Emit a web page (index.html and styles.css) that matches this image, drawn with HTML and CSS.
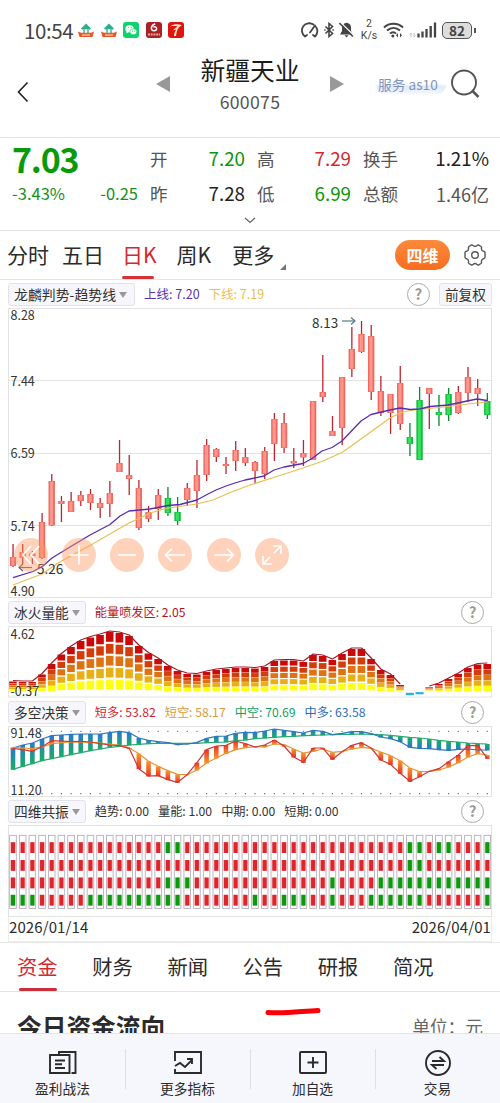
FILE: index.html
```html
<!DOCTYPE html>
<html lang="zh-CN">
<head>
    <meta charset="UTF-8">
    <meta name="viewport" content="width=device-width, initial-scale=1.0">
    <title>新疆天业 600075</title>
    <link rel="stylesheet" href="styles.css">
</head>
<body>
    <div class="status-bar">
        <span class="time">10:54</span>
        <div class="apps">
            <svg width="16" height="16" viewBox="0 0 16 16"><path d="M3 6.5L8 1.5l5 5-1 1H4z" fill="#2fae8b"/><path d="M5 7h6v4H5z" fill="#6fcbb0"/><path d="M7 7.500h2V11H7z" fill="#fff"/><path d="M0 9.500l3 1.200h10l3-1.200-1.500 5.500h-13z" fill="#ea5526"/><path d="M4 13h8" stroke="#fbd0bd" stroke-width="1.200"/></svg>
            <svg width="16" height="16" viewBox="0 0 16 16"><path d="M3 6.500L8 1.500l5 5-1 1H4z" fill="#2fae8b"/><path d="M5 7h6v4H5z" fill="#6fcbb0"/><path d="M7 7.500h2V11H7z" fill="#fff"/><path d="M0 9.500l3 1.200h10l3-1.200-1.500 5.500h-13z" fill="#ea5526"/><path d="M4 13h8" stroke="#fbd0bd" stroke-width="1.200"/></svg>
            <svg width="16" height="16" viewBox="0 0 16 16"><rect width="16" height="16" rx="3" fill="#0bd46c"/><ellipse cx="6.500" cy="6.700" rx="4.200" ry="3.500" fill="#fff"/><path d="M3.500 9l0 2.500 2.500-1.500z" fill="#fff"/><ellipse cx="10.300" cy="9.700" rx="3.500" ry="2.900" fill="#fff" stroke="#0bd46c" stroke-width=".6"/><path d="M5 5.700h.9M7.800 5.700h.9M9 9.200h.8M11.300 9.200h.8" stroke="#0bd46c" stroke-width="1"/></svg>
            <svg width="16" height="16" viewBox="0 0 16 16"><rect width="16" height="16" rx="3" fill="#ae1f23"/><path d="M9.200 1.800C6.500 3 5.300 4.500 5.400 6.500c.3 3 5 3 5.200.2 0-1.800-2-2.600-3.200-1.400" fill="none" stroke="#fff" stroke-width="1.500"/><path d="M2 12.500h12" stroke="#e9a99b" stroke-width="2" stroke-dasharray="2 .7"/></svg>
            <svg width="16" height="16" viewBox="0 0 16 16"><rect width="16" height="16" rx="3" fill="#e0140f"/><path d="M2 4.500C6 1.500 10 2 14 3.200 10.500 5 9 7 8 14H6c.3-3 .8-4.500 2.300-6.500L5 8.300C7 6.500 8 5.500 9.500 4.500 7 3.800 4.500 4 2 4.500z" fill="#ffe9c9"/></svg>
        </div>
        <div class="system">
            <svg class="gauge" width="18" height="17" viewBox="0 0 18 17"><path d="M4 14.500A7.200 7.200 0 0 1 12.500 2.600M15 5A7.200 7.200 0 0 1 14 14.500M9 10.500L14 3.500M4 14.500l2-1.500M14 14.500l-2-1.500" fill="none" stroke="#444" stroke-width="1.800" stroke-linecap="round"/></svg>
            <svg class="bluetooth" width="10" height="16" viewBox="0 0 10 16"><path d="M1.500 4.500l7 7L5 14.500v-13L8.500 4.500l-7 7M.2 8h1.400M8.400 8h1.400" fill="none" stroke="#444" stroke-width="1.600"/></svg>
            <svg class="mute" width="15" height="16" viewBox="0 0 15 16"><path d="M7.500 .8c3.500 .7 4.500 2.500 4.500 5v3.200l2 3.500H1L3 9V5.500C3.500 3 5 1.300 7.500 .8zM5.500 13.300h4l-2 2.200z" fill="#444"/><path d="M1.500 .5l13.500 13" stroke="#fff" stroke-width="1.300"/><path d="M.4 1l13.500 13.500" stroke="#444" stroke-width="1.600"/></svg>
            <div class="speed"><div>2</div><div>K/s</div></div>
            <svg class="wifi" width="21" height="16" viewBox="0 0 21 16"><path d="M1 5.500c5.200-5 13.800-5 19 0M4 8.600c4-3.600 9-3.600 13 0M7 11.600c2-1.800 4.500-1.800 6 0" fill="none" stroke="#444" stroke-width="2"/><circle cx="9.800" cy="14" r="1.500" fill="#444"/><path d="M15 11l-2 2.200 2 2.200zM17 11l2 2.200-2 2.200z" fill="#444"/></svg>
            <svg class="signal" width="28" height="16" viewBox="0 0 28 16"><path d="M2 11v4M0.500 12.500L2 11M5 15v-4M6.500 13.500L5 15" stroke="#bbb"/><path d="M9.500 15.500v-4M13.500 15.500v-6M17.500 15.500v-8.500M21.700 15.500v-11.500M26 15.500v-15" stroke="#444" stroke-width="2.300"/></svg>
            <span class="battery">82</span>
        </div>
    </div>

    <div class="nav">
        <svg class="back" width="12" height="22" viewBox="0 0 12 22"><path d="M10.500 1.500L1.500 11l9 9.500" fill="none" stroke="#222" stroke-width="1.600"/></svg>
        <svg class="prev" width="14" height="16" viewBox="0 0 14 16"><path d="M14 0v16L0 8z" fill="#999"/></svg>
        <div class="stock">
            <div class="stock-name">新疆天业</div>
            <div class="stock-code">600075</div>
        </div>
        <svg class="next" width="14" height="16" viewBox="0 0 14 16"><path d="M0 0v16l14-8z" fill="#999"/></svg>
        <span class="service">服务 as10</span>
        <svg class="search" width="29" height="30" viewBox="0 0 29 30"><circle cx="13" cy="13.500" r="12" fill="none" stroke="#555" stroke-width="1.900"/><path d="M21.500 22l6 6" stroke="#555" stroke-width="2.500"/></svg>
    </div>

    <div class="quote">
        <div class="quote-grid">
            <div class="cell"><b class="price">7.03</b></div>
            <div class="cell"><label>开</label><span class="down">7.20</span></div>
            <div class="cell"><label>高</label><span class="up">7.29</span></div>
            <div class="cell"><label>换手</label><span>1.21%</span></div>
            <div class="cell change"><span>-3.43%</span><span>-0.25</span></div>
            <div class="cell"><label>昨</label><span>7.28</span></div>
            <div class="cell"><label>低</label><span class="down">6.99</span></div>
            <div class="cell"><label>总额</label><span class="amount">1.46亿</span></div>
        </div>
        <svg class="expand" width="12" height="7" viewBox="0 0 12 7"><path d="M1 1l5 4.500L11 1" fill="none" stroke="#666" stroke-width="1.300"/></svg>
    </div>

    <div class="periods">
        <span>分时</span>
        <span>五日</span>
        <span class="active">日K</span>
        <span>周K</span>
        <span class="more">更多</span>
        <button class="pill">四维</button>
        <svg class="gear" width="24" height="24" viewBox="0 0 24 24"><path d="M8.200 2.200Q9.200 1.600 10 2.500Q12 4.300 14 2.500Q14.800 1.600 15.800 2.200L18 3.500Q18.800 4 18.500 5Q18 7.500 20.600 8.300Q22 8.600 22 9.700V14.300Q22 15.400 20.600 15.700Q18 16.500 18.500 19Q18.800 20 18 20.500L15.800 21.800Q14.800 22.400 14 21.500Q12 19.700 10 21.500Q9.200 22.400 8.200 21.800L6 20.500Q5.200 20 5.500 19Q6 16.500 3.400 15.700Q2 15.400 2 14.300V9.700Q2 8.600 3.400 8.300Q6 7.500 5.500 5Q5.200 4 6 3.500Z" fill="none" stroke="#555" stroke-width="1.400"/><circle cx="12" cy="12" r="3.300" fill="none" stroke="#555" stroke-width="1.400"/></svg>
    </div>

    <div class="indicator main">
        <span class="select">龙麟判势-趋势线</span>
        <span class="purple">上线: 7.20</span>
        <span class="yellow">下线: 7.19</span>
        <span class="help">?</span>
        <span class="adjust">前复权</span>
    </div>
    <div class="kline">
        <svg id="kline" class="chart" width="500" height="290" viewBox="0 308 500 290"></svg>
        <div class="tools">
            <span class="tool"><svg viewBox="0 0 34 34"><path d="M17 8l-8 9 8 9M25 8l-8 9 8 9"/></svg></span>
            <span class="tool"><svg viewBox="0 0 34 34"><path d="M17 7.500v19M7.500 17h19"/></svg></span>
            <span class="tool"><svg viewBox="0 0 34 34"><path d="M8 17h18"/></svg></span>
            <span class="tool"><svg viewBox="0 0 34 34"><path d="M27 17H8M14 10.500L7.500 17l6.500 6.500"/></svg></span>
            <span class="tool"><svg viewBox="0 0 34 34"><path d="M7 17h19M20 10.500l6.500 6.500-6.500 6.500"/></svg></span>
            <span class="tool"><svg viewBox="0 0 34 34"><path d="M19 15l7-7M18 8h8v8M15 19l-7 7M8 18v8h9"/></svg></span>
        </div>
    </div>

    <div class="indicator">
        <span class="select">冰火量能</span>
        <span class="crimson">能量喷发区: 2.05</span>
        <span class="help">?</span>
    </div>
    <svg id="energy" class="chart" width="500" height="72" viewBox="0 626 500 72"></svg>

    <div class="indicator">
        <span class="select">多空决策</span>
        <span class="red">短多: 53.82</span>
        <span class="orange">短空: 58.17</span>
        <span class="green">中空: 70.69</span>
        <span class="blue">中多: 63.58</span>
        <span class="help">?</span>
    </div>
    <svg id="decision" class="chart" width="500" height="71" viewBox="0 726 500 71"></svg>

    <div class="indicator">
        <span class="select">四维共振</span>
        <span>趋势: 0.00</span>
        <span>量能: 1.00</span>
        <span>中期: 0.00</span>
        <span>短期: 0.00</span>
        <span class="help">?</span>
    </div>
    <svg id="resonance" class="chart" width="500" height="92" viewBox="0 825 500 92"></svg>
    <div class="dates"><span>2026/01/14</span><span>2026/04/01</span></div>

    <div class="sections">
        <span class="active">资金</span>
        <span>财务</span>
        <span>新闻</span>
        <span>公告</span>
        <span>研报</span>
        <span>简况</span>
    </div>
    <div class="flow">
        <h2>今日资金流向</h2>
        <span class="unit">单位：元</span>
        <svg class="mark" width="58" height="10" viewBox="0 0 58 10"><path d="M3 5.500C20 7 38 4 53 3.500" fill="none" stroke="#fb0006" stroke-width="5" stroke-linecap="round"/></svg>
    </div>

    <div class="toolbar">
        <div class="action">
            <svg width="30" height="26" viewBox="0 0 30 26"><path d="M2 5h19.500v18H2zM11 4V2h16.500v21H23.500M7 10.500h10M7 14.200h7M7 18h10"/></svg>
            <span>盈利战法</span>
        </div>
        <div class="action">
            <svg width="30" height="26" viewBox="0 0 30 26"><path d="M2 11V2h26v21H2v-4M2 16l5-3 5 4 7-7M14 9h5v5"/></svg>
            <span>更多指标</span>
        </div>
        <div class="action">
            <svg width="30" height="26" viewBox="0 0 30 26"><rect x="2" y="2" width="26" height="21" rx="1"/><path d="M15 7v11M9.500 12.500h11"/></svg>
            <span>加自选</span>
        </div>
        <div class="action">
            <svg width="30" height="26" viewBox="0 0 30 26"><circle cx="15" cy="13" r="12"/><path d="M9 11h12l-4.500-4M21 15H9l4.500 4"/></svg>
            <span>交易</span>
        </div>
    </div>
    <script src="charts.js"></script>
</body>
</html>
```
FILE: styles.css
```css
* {
    box-sizing: border-box;
}

body {
    margin: 0;
    width: 500px;
    height: 1103px;
    overflow: hidden;
    background-color: #fff;
    color: #2b2b2b;
    font-family: "Noto Sans CJK SC", sans-serif;
    line-height: 1;
}

svg {
    display: block;
    flex: none;
}

/* status bar */
.status-bar {
    display: flex;
    align-items: center;
    height: 60px;
    padding: 0 28px 0 24px;
    color: #444;
}

.time {
    width: 54px;
    font-size: 20.5px;
    letter-spacing: -0.4px;
}

.apps {
    display: flex;
    gap: 6.5px;
}

.system {
    display: flex;
    align-items: center;
    margin-left: auto;
}

.bluetooth {
    margin-left: 5px;
}

.mute {
    margin-left: 5px;
}

.speed {
    width: 18px;
    margin: 0 5px 0 6px;
    font-family: Roboto, sans-serif;
    font-size: 10.5px;
    line-height: 12.5px;
    text-align: center;
}

.signal {
    margin: 0 5px 0 5px;
}

.battery {
    position: relative;
    width: 30px;
    height: 17px;
    border: 1.5px solid #555;
    border-radius: 5px;
    background-color: #ddd;
    font-size: 13.5px;
    font-weight: bold;
    line-height: 14px;
    text-align: center;
}

.battery::after {
    content: "";
    position: absolute;
    right: -4.5px;
    top: 5px;
    width: 2px;
    height: 5px;
    background-color: #555;
}

/* title */
.nav {
    display: flex;
    align-items: center;
    height: 78px;
    padding: 0 20px 30px 17px;
    border-bottom: 1px solid #e3e3e3;
}

.back {
    margin-top: 16px;
}

.prev {
    margin-left: 127px;
}

.stock {
    width: 160px;
    height: 64px;
    text-align: center;
}

.stock-name {
    font-size: 24.8px;
    line-height: 34px;
    color: #1c1c1c;
}

.stock-code {
    font-size: 17.7px;
    line-height: 30px;
    letter-spacing: 0.3px;
    color: #555;
}

.service {
    width: 70px;
    margin-left: 32px;
    padding: 3px 2px;
    border-radius: 10px;
    background: linear-gradient(transparent 50%, #deebf8 60%, #eef5fc 90%, transparent);
    font-size: 13.7px;
    line-height: 16px;
    white-space: nowrap;
    color: #8093c0;
}

.search {
    margin-left: auto;
}

/* quote */
.quote {
    height: 93px;
    padding: 3px 11px 0 12px;
    border-bottom: 1px solid #e3e3e3;
}

.quote-grid {
    display: grid;
    grid-template-columns: 126px 95px 94px 126px;
    grid-auto-rows: 35px;
    column-gap: 12px;
}

.cell {
    display: flex;
    align-items: center;
    justify-content: space-between;
    font-size: 18.8px;
    color: #222;
}

.cell label {
    font-size: 17.5px;
    color: #555;
}

.price {
    font-size: 34px;
    letter-spacing: -1.2px;
    color: #089a08;
}

.change {
    font-size: 16.5px;
    color: #16901a;
}

.down {
    color: #0b960b;
}

.up {
    color: #d2292f;
}

.cell .amount {
    font-size: 18px;
    color: #555;
}

.expand {
    margin: 6px 0 0 232px;
}

/* period tabs */
.periods {
    display: flex;
    align-items: center;
    height: 49px;
    padding-left: 7px;
    border-bottom: 1px solid #e3e3e3;
    font-size: 21px;
    line-height: 48px;
}

.periods span {
    position: relative;
    height: 48px;
    margin-right: 13px;
    line-height: 46px;
}

.periods .active {
    margin: 0 20px 0 5px;
    color: #d2292f;
}

.periods .active::after {
    content: "";
    position: absolute;
    left: 0;
    bottom: 0;
    width: 32px;
    height: 3px;
    border-radius: 2px;
    background-color: #d2323a;
}

.periods .more {
    margin-left: 8px;
}

.periods .more::after {
    content: "";
    position: absolute;
    right: -12px;
    bottom: 9px;
    border-left: 6px solid transparent;
    border-bottom: 6px solid #777;
}

.pill {
    width: 55px;
    height: 30px;
    margin-left: auto;
    padding: 0;
    border: none;
    border-radius: 15px;
    background: linear-gradient(#fa8a3e, #f96d1e);
    color: #fff;
    font: bold 16px/29px "Noto Sans CJK SC", sans-serif;
}

.gear {
    margin: 0 13px;
}

/* indicator header rows */
.indicator {
    display: flex;
    align-items: center;
    gap: 9px;
    height: 28px;
    padding: 0 16px 0 8px;
    font-size: 12.2px;
    color: #333;
    white-space: nowrap;
}

.select,
.adjust {
    height: 23px;
    padding: 0 5px;
    border: 1px solid #e2e2ec;
    border-radius: 3px;
    background-color: #f6f6fc;
    font-size: 13.7px;
    line-height: 20px;
}

.select::after {
    content: "";
    display: inline-block;
    margin-left: 3px;
    border: 4.5px solid transparent;
    border-top: 6px solid #999;
    border-bottom: none;
    vertical-align: 2px;
}

.help {
    width: 23px;
    height: 23px;
    margin-left: auto;
    border: 1px solid #aaa;
    border-radius: 50%;
    font-size: 15px;
    font-weight: bold;
    line-height: 20px;
    text-align: center;
    color: #999;
}

.main {
    padding-right: 8px;
    font-size: 12.5px;
}

.main .select {
    width: 127px;
    font-size: 13.9px;
}

.purple { color: #5b2fae; }
.yellow { color: #edbd55; }
.crimson { color: #b3151f; }
.red { color: #cf2430; }
.orange { color: #dc9a3c; }
.green { color: #12a165; }
.blue { color: #2a6cb8; }

/* charts */
.chart {
    overflow: visible;
}

.chart text {
    font-size: 12.5px;
    fill: #333;
}

.frame {
    fill: none;
    stroke: #e2e2e2;
}

.kline {
    position: relative;
}

.tools {
    position: absolute;
    left: 13.5px;
    top: 230px;
    display: flex;
    gap: 14.3px;
}

.tool {
    width: 34px;
    height: 34px;
    border-radius: 50%;
    background-color: rgba(255, 150, 94, 0.42);
}

.tool path {
    fill: none;
    stroke: #fff;
    stroke-width: 1.7;
}

.dates {
    display: flex;
    justify-content: space-between;
    height: 25px;
    margin: 0 8px;
    border: 1px solid #ececec;
    border-top: none;
    font-size: 15px;
    letter-spacing: 0.1px;
    line-height: 20px;
}

/* lower tabs */
.sections {
    display: flex;
    height: 50px;
    border-top: 1px solid #e8e8e8;
    border-bottom: 1px solid #e3e3e3;
    font-size: 20.3px;
    line-height: 47px;
}

.sections span {
    position: relative;
    width: 75.2px;
    padding-left: 17px;
}

.sections .active {
    color: #d2292f;
}

.sections .active::after {
    content: "";
    position: absolute;
    left: 19px;
    bottom: 0;
    width: 38px;
    height: 3px;
    border-radius: 2px;
    background-color: #c9303a;
}

.flow {
    position: relative;
    display: flex;
    justify-content: space-between;
    height: 41px;
    padding: 20px 17px 0;
    overflow: hidden;
}

.flow h2 {
    margin: 0;
    font-size: 24.7px;
    line-height: 28px;
    white-space: nowrap;
}

.unit {
    font-size: 17.7px;
    line-height: 28px;
    color: #666;
}

.mark {
    position: absolute;
    left: 265px;
    top: 15px;
}

/* bottom toolbar */
.toolbar {
    display: flex;
    height: 70px;
    border-top: 1px solid #e3e3e8;
    background-color: #f6f6fd;
}

.action {
    position: relative;
    flex: 1;
    display: flex;
    flex-direction: column;
    align-items: center;
    padding-top: 16px;
    font-size: 13.7px;
}

.action + .action::before {
    content: "";
    position: absolute;
    left: 0;
    top: 15px;
    height: 40px;
    border-left: 1px solid #dedee4;
}

.action svg {
    margin-bottom: 6px;
    fill: none;
    stroke: #2b2b2b;
    stroke-width: 1.9;
}
```
FILE: charts.js
```javascript
const STEP = 9.68;
const COUNT = 50;
const cx = (i) => 13 + i * STEP;
const range = (a, b) => Array.from({ length: b - a + 1 }, (_, k) => a + k);

const rect = (x, y, w, h, fill) =>
    `<rect x="${x.toFixed(2)}" y="${y.toFixed(2)}" width="${w}" height="${h.toFixed(2)}" fill="${fill}"/>`;
const line = (points, color, width = 1.2) =>
    `<polyline points="${points.map((p) => p.join(",")).join(" ")}" fill="none" stroke="${color}" stroke-width="${width}" stroke-linejoin="round"/>`;
const frame = (y, h) => `<rect class="frame" x="8.5" y="${y}" width="483" height="${h}"/>`;

// high, low, body top, body bottom
const candles = [
    [544, 567, 557, 566], [544, 564, 552, 558], [551, 564, 553.5, 556], [513, 559, 522, 558], [474, 526, 481, 525.5],
    [496, 522, 501, 504], [492, 512, 501, 512], [491, 506, 495, 501], [489, 510, 494, 503], [498, 518, 503, 508],
    [481, 517, 493, 504], [440, 472, 463, 472], [455, 495, 475, 479], [480, 530, 488, 528], [506, 522, 512, 519],
    [489, 520, 495, 509], [487, 516, 498, 513], [497, 525, 512, 521], [483, 506, 488, 500], [460, 508, 475, 491],
    [439, 481, 445, 475], [448, 462, 449, 457], [457, 474, 464, 466], [441, 471, 450, 461], [448, 466, 457, 463],
    [461, 483, 462, 471], [447, 479, 451, 474], [413, 461, 419, 444], [413, 453, 423, 448], [448, 468, 461, 463.5],
    [440, 466, 453, 457.5], [401, 460, 401, 460], [355, 402, 392, 397], [416, 436, 431, 436], [377, 445, 377, 428],
    [327, 377, 349, 369], [321, 353, 334, 352], [325, 400, 336, 392], [376, 416, 391, 413], [394, 434, 394, 413],
    [366, 430, 383, 424], [423, 456, 437, 444], [387, 460, 400, 460], [388, 429, 388, 394], [395, 426, 412, 415],
    [388, 421, 394, 415], [386, 414, 392, 413], [367, 402, 377, 393], [379, 406, 388, 394], [393, 419, 401, 415]
];
const falling = [16, 17, 41, 42, 44, 45, 49];

const upper = [
    [13, 577.7], [33, 571.5], [43, 566], [52, 558], [70, 547], [90, 535], [110, 524.5], [120, 516], [129, 511],
    [150, 509], [168, 505.5], [180, 504.5], [197, 500], [207, 494.5], [216, 490], [226, 486], [235, 483], [245, 480],
    [250, 479], [264, 476], [274, 470], [284, 467], [303, 463.5], [312, 458.5], [322, 451], [332, 447.5], [342, 441],
    [351, 431.5], [361, 421], [371, 414.5], [390, 410], [400, 408], [410, 409.5], [420, 409], [430, 406.5],
    [448, 405], [458, 403], [467, 401], [477, 399], [487, 400.5]
];
const lower = [
    [13, 585], [42, 574], [58, 563], [90, 545.5], [129, 523], [139, 518.5], [150, 513], [168, 508], [197, 504],
    [213, 500], [229, 493], [250, 485], [266, 480], [303, 468], [323, 461], [342, 452.5], [361, 439], [390, 418],
    [400, 413], [410, 410.5], [448, 406.5], [468, 404], [487, 402]
];

function drawKline() {
    let out = frame(308.5, 289);
    [380.5, 453.5, 525.5].forEach((y) => { out += line([[8, y], [492, y]], "#e2e2e2", 1); });
    candles.forEach(([high, low, top, bottom], i) => {
        const green = falling.includes(i);
        out += rect(cx(i) - 0.6, high, 1.3, low - high, green ? "#078c28" : "#bd2530");
        out += rect(cx(i) - 3.2, top, 6.4, bottom - top, green ? "#12bd3e" : "#f0685f");
        out += rect(cx(i) - 1.8, top + 0.5, 3.2, Math.max(bottom - top - 1, 1), green ? "#35e05c" : "#fb968c");
    });
    out += line(lower, "#e9bf51") + line(upper, "#5a2daf", 1.3);
    [["8.28", 320], ["7.44", 385.5], ["6.59", 458], ["5.74", 531], ["4.90", 596]].forEach(([t, y]) => {
        out += `<text x="10.500" y="${y}">${t}</text>`;
    });
    out += `<text x="312" y="327.500" style="font-size:13.500px">8.13</text>`;
    out += line([[342, 321], [355, 321]], "#557b8b") + line([[351, 317.5], [355, 321], [351, 324.5]], "#557b8b");
    out += `<text x="37" y="574" style="font-size:13.500px">5.26</text>`;
    out += line([[19, 567.5], [32, 567.5]], "#666") + line([[23, 564], [19, 567.5], [23, 571]], "#666");
    document.getElementById("kline").innerHTML = out;
}

const energy = [
    681.5, 682, 682, 674.5, 664, 654.5, 647, 641, 637.5, 635, 632, 633, 636, 646, 653.5, 659, 666, 671, 674, 674.5,
    672, 670, 669, 668, 668, 668.5, 667, 661, 660.5, 660.5, 662, 655, 656, 660, 654, 649, 649, 659, 670, 675, 685,
    null, null, 687, 684, 679, 674, 668, 664.5, 664
];
const heat = ["#c90a08", "#d53c0b", "#df7313", "#e8af16", "#ffff13"];

function drawEnergy() {
    let out = frame(626.5, 70.5);
    energy.forEach((top, i) => {
        if (top === null) {
            out += rect(cx(i) - 4, 692.8 - (i - 41) * 0.7, 8, 2.2, "#29b1df");
            return;
        }
        const part = (691.5 - top) / 5;
        const gap = part > 5.5 ? part * 0.18 : 0.3;
        heat.forEach((color, k) => { out += rect(cx(i) - 3.9, top + k * part, 7.6, part - gap, color); });
    });
    const tops = energy.map((y, i) => [cx(i), y === null ? null : y - 1]);
    out += line(tops.slice(0, 41), "#a31b2b") + line(tops.slice(43), "#a31b2b");
    out += `<text x="10.500" y="638.500">4.62</text><text x="10.500" y="696">-0.37</text>`;
    document.getElementById("energy").innerHTML = out;
}

// series below are in thirds of a pixel under y = 698
const midLong = [
    150, 141, 135, 123, 113, 111, 109, 108, 108, 108, 104, 100, 104, 120, 127, 131, 134, 140, 138, 133, 121, 115, 114,
    106, 103, 104, 99, 93, 97, 101, 105, 97, 100, 110, 106, 101, 101, 107, 117, 122, 131, 148, 151, 152, 155, 157,
    154, 153, 156, 156
];
const midShort = [
    214, 205, 197, 188, 182, 176, 170, 164, 158, 153, 148, 145, 141, 139, 137, 136, 136, 136, 136, 136, 134, 133, 132,
    128, 126, 122, 120, 118, 116, 115, 113, 112, 111, 110, 109, 109, 108, 109, 110, 112, 115, 118, 120, 123, 127, 130,
    132, 135, 137, 138
];
const nearLong = [
    151, 155, 160, 146, 128, 129, 131, 130, 132, 137, 141, 143, 151, 212, 234, 233, 245, 253, 230, 194, 155, 144, 142,
    129, 137, 147, 141, 126, 144, 177, 193, 150, 150, 184, 161, 142, 134, 150, 186, 199, 226, 250, 236, 220, 212, 191,
    171, 143, 142, 181
];
const nearShort = [
    148, 150, 152, 147, 137, 134, 132, 132, 133, 135, 138, 142, 149, 167, 190, 205, 218, 229, 230, 216, 195, 180, 166,
    155, 149, 146, 147, 138, 140, 153, 165, 160, 153, 163, 160, 153, 148, 151, 162, 173, 188, 210, 221, 220, 216, 207,
    194, 177, 167, 171
];

function drawDecision() {
    const y = (v) => 698 + v / 3;
    const grad = (id, a, b) =>
        `<linearGradient id="${id}" x1="0" y1="0" x2="0" y2="1"><stop offset="0" stop-color="${a}"/><stop offset="1" stop-color="${b}"/></linearGradient>`;
    let out = `<defs>${grad("bg", "#2a78d0", "#17b05f")}${grad("gb", "#17b05f", "#2a78d0")}${grad("ro", "#ec3422", "#f7952c")}${grad("or", "#f7952c", "#ec3422")}</defs>`;
    out += frame(726.5, 70);
    for (let i = 3; i < COUNT; i++) {
        out += rect(cx(i) - 0.6, 730.8, 1.2, 1.2, "#4d8f96") + rect(cx(i) - 0.6, 793, 1.2, 1.2, "#aa4c4c");
    }
    const bars = (a, b, down, up) => a.forEach((v, i) => {
        const top = y(Math.min(v, b[i]));
        const h = Math.abs(v - b[i]) / 3;
        out += rect(cx(i) - 2.3, top, 4.6, h + 0.5, `url(#${v < b[i] ? down : up})`);
    });
    bars(midLong, midShort, "bg", "gb");
    bars(nearLong, nearShort, "ro", "or");
    [[midShort, "#25aa72"], [midLong, "#2d78c0"], [nearShort, "#e79434"], [nearLong, "#cf3836"]].forEach(([s, c]) => {
        out += line(s.map((v, i) => [cx(i), y(v)]), c);
    });
    out += `<text x="10.500" y="737.500">91.48</text><text x="10.500" y="795">11.20</text>`;
    document.getElementById("decision").innerHTML = out;
}

const greenCells = [
    [16, 17, 41, 42, 44, 45, 49],
    [41, 42],
    [16, 17, 18, 33, ...range(38, 49)],
    [0, 1, 2, ...range(8, 17), 25, 28, 29, 30, 33, ...range(37, 42), 49]
];
const cellTops = [842.2, 860, 877.5, 894.8];

function drawResonance() {
    let out = frame(825.5, 91);
    for (let i = 0; i < COUNT; i++) {
        out += `<rect x="${cx(i) - 3.3}" y="835.300" width="6.600" height="73.200" fill="#fff" stroke="#aaa6b5" stroke-width=".8"/>`;
        greenCells.forEach((row, k) => {
            const green = row.includes(i);
            out += rect(cx(i) - 3, cellTops[k], 6, 10.8, green ? "#b7dfb5" : "#f7c3c5");
            out += rect(cx(i) - 2, cellTops[k], 4, 10.8, green ? "#0d980d" : "#df252b");
        });
    }
    document.getElementById("resonance").innerHTML = out;
}

drawKline();
drawEnergy();
drawDecision();
drawResonance();
```
